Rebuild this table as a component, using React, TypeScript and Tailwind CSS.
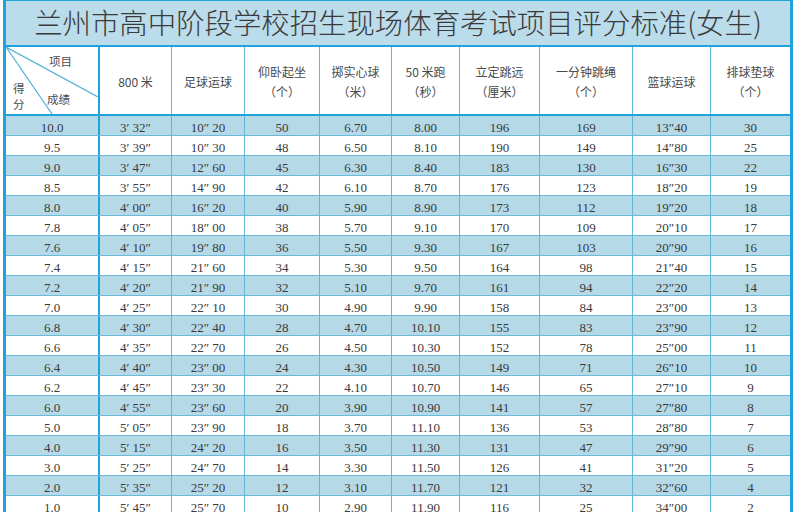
import React from "react";

type Row = [string, string, string, string, string, string, string, string, string, string];

const rows: Row[] = [
  ["10.0", "3′ 32″", "10″ 20", "50", "6.70", "8.00", "196", "169", "13″40", "30"],
  ["9.5", "3′ 39″", "10″ 30", "48", "6.50", "8.10", "190", "149", "14″80", "25"],
  ["9.0", "3′ 47″", "12″ 60", "45", "6.30", "8.40", "183", "130", "16″30", "22"],
  ["8.5", "3′ 55″", "14″ 90", "42", "6.10", "8.70", "176", "123", "18″20", "19"],
  ["8.0", "4′ 00″", "16″ 20", "40", "5.90", "8.90", "173", "112", "19″20", "18"],
  ["7.8", "4′ 05″", "18″ 00", "38", "5.70", "9.10", "170", "109", "20″10", "17"],
  ["7.6", "4′ 10″", "19″ 80", "36", "5.50", "9.30", "167", "103", "20″90", "16"],
  ["7.4", "4′ 15″", "21″ 60", "34", "5.30", "9.50", "164", "98", "21″40", "15"],
  ["7.2", "4′ 20″", "21″ 90", "32", "5.10", "9.70", "161", "94", "22″20", "14"],
  ["7.0", "4′ 25″", "22″ 10", "30", "4.90", "9.90", "158", "84", "23″00", "13"],
  ["6.8", "4′ 30″", "22″ 40", "28", "4.70", "10.10", "155", "83", "23″90", "12"],
  ["6.6", "4′ 35″", "22″ 70", "26", "4.50", "10.30", "152", "78", "25″00", "11"],
  ["6.4", "4′ 40″", "23″ 00", "24", "4.30", "10.50", "149", "71", "26″10", "10"],
  ["6.2", "4′ 45″", "23″ 30", "22", "4.10", "10.70", "146", "65", "27″10", "9"],
  ["6.0", "4′ 55″", "23″ 60", "20", "3.90", "10.90", "141", "57", "27″80", "8"],
  ["5.0", "5′ 05″", "23″ 90", "18", "3.70", "11.10", "136", "53", "28″80", "7"],
  ["4.0", "5′ 15″", "24″ 20", "16", "3.50", "11.30", "131", "47", "29″90", "6"],
  ["3.0", "5′ 25″", "24″ 70", "14", "3.30", "11.50", "126", "41", "31″20", "5"],
  ["2.0", "5′ 35″", "25″ 20", "12", "3.10", "11.70", "121", "32", "32″60", "4"],
  ["1.0", "5′ 45″", "25″ 70", "10", "2.90", "11.90", "116", "25", "34″00", "2"],
];

const headers: [string, string?][] = [
  ["800 米"],
  ["足球运球"],
  ["仰卧起坐", "（个）"],
  ["掷实心球", "（米）"],
  ["50 米跑", "（秒）"],
  ["立定跳远", "（厘米）"],
  ["一分钟跳绳", "（个）"],
  ["篮球运球"],
  ["排球垫球", "（个）"],
];

const grid = "grid grid-cols-[94px_72px_73px_75px_72px_68px_80px_93px_78px_79px]";

export default function App() {
  return (
    <div className="w-[800px] h-[512px] overflow-hidden bg-white">
      <div className="ml-[3px] w-[790px] border-x-[3px] border-t border-[#1fa3dc] font-['Liberation_Serif','Noto_Sans_CJK_SC',serif] text-[#3a3a3a]">
        {/* Title */}
        <div className="h-[46px] bg-[#bbdcea] border-b-2 border-[#1fa3dc] flex items-center justify-center">
          <h1 className="text-[28.4px] leading-none font-light font-['Noto_Sans_CJK_SC',sans-serif] text-[#3a3a3a] pb-[1px]">
            兰州市高中阶段学校招生现场体育考试项目评分标准(女生)
          </h1>
        </div>

        {/* Header */}
        <div className={`${grid} h-[69px] border-b-2 border-[#1fa3dc] font-['Noto_Sans_CJK_SC',serif] text-[#4a4a4a]`}>
          <div className="relative border-r-2 border-[#1fa3dc] text-[11.5px]">
            <svg className="absolute inset-0" width="92" height="67" viewBox="0 0 92 67">
              <line x1="0" y1="0" x2="92" y2="50" stroke="#4fb0d4" strokeWidth="1.2" />
              <line x1="0" y1="0" x2="46" y2="67" stroke="#4fb0d4" strokeWidth="1.2" />
            </svg>
            <span className="absolute left-[43px] top-[6px]">项目</span>
            <span className="absolute left-[41px] top-[44px]">成绩</span>
            <span className="absolute left-[7px] top-[33px]">得</span>
            <span className="absolute left-[7px] top-[49px]">分</span>
          </div>
          {headers.map(([a, b], i) => (
            <div
              key={i}
              className={`flex flex-col items-center justify-center pt-[3px] text-[12px] leading-[20px] ${i < headers.length - 1 ? "border-r border-[#62b6d6]" : ""}`}
            >
              <span>{a}</span>
              {b && <span>{b}</span>}
            </div>
          ))}
        </div>

        {/* Data rows */}
        {rows.map((r, ri) => (
          <div
            key={ri}
            className={`${grid} h-[20px] border-b border-[#6cbad8] text-[13px] ${ri % 2 === 0 ? "bg-[#b5d9e7]" : "bg-white"}`}
          >
            {r.map((v, ci) => (
              <div
                key={ci}
                className={`flex items-center justify-center pt-[4px] leading-none whitespace-nowrap ${
                  ci === 0 ? "border-r-2 border-[#1fa3dc]" : ci < 9 ? "border-r border-[#62b6d6]" : ""
                }`}
              >
                {v}
              </div>
            ))}
          </div>
        ))}
      </div>
    </div>
  );
}
